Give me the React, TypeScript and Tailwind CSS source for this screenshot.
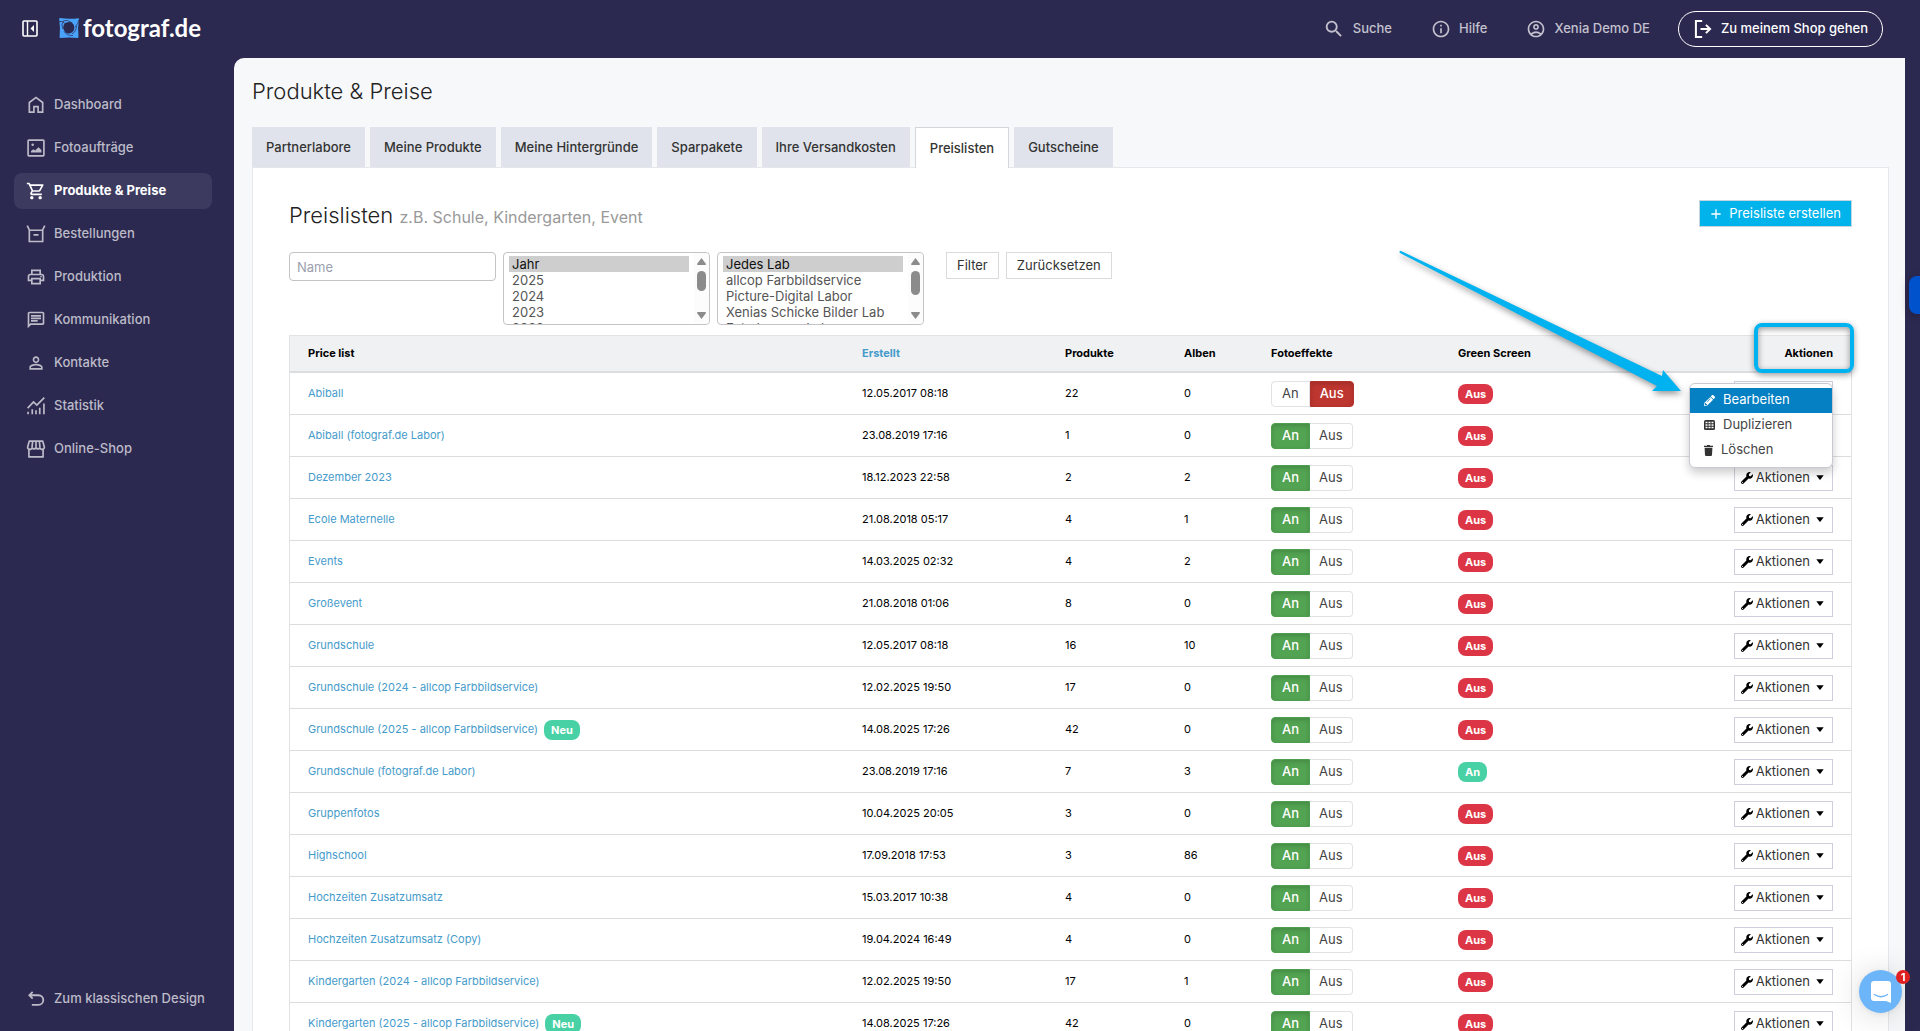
import type { ReactNode } from 'react'
import {
  MdOutlineShoppingCart,
  MdOutlinePrint,
  MdOutlineChat,
  MdPersonOutline,
  MdSearch,
  MdInfoOutline,
  MdOutlineAccountCircle,
  MdAdd,
} from 'react-icons/md'
import { FaWrench, FaPencilAlt } from 'react-icons/fa'

function Icon({ children, size = 20 }: { children: ReactNode; size?: number }) {
  return (
    <svg width={size} height={size} viewBox="0 0 24 24" fill="currentColor" className="shrink-0" aria-hidden>
      {children}
    </svg>
  )
}

const HomeIcon = () => (
  <Icon>
    <path d="M5 19.500h3.500V13h7v6.500H19v-10l-7-5.300-7 5.300zM3 21.500v-13L12 1.700l9 6.800v13h-7.500V15h-3v6.500z" />
  </Icon>
)

const PhotoIcon = () => (
  <Icon>
    <rect x="2.500" y="2.500" width="19" height="19" rx="1" fill="none" stroke="currentColor" strokeWidth="2" />
    <path d="M6 17.500v-2l3-2 2 1.500 4-4 3.500 3.500v3z" />
    <circle cx="8" cy="8" r="1.500" />
  </Icon>
)

const BoxIcon = () => (
  <Icon>
    <path
      d="M1.500 2 4 7v14h16V7l2.500-5M4 7.500h16M9 13h6"
      fill="none"
      stroke="currentColor"
      strokeWidth="2"
    />
  </Icon>
)

const StatsIcon = () => (
  <Icon>
    <path
      d="M2 14.500 9 7l4 4L22 2M2.500 22v-3M7.500 22v-6M12 22v-5M16.500 22v-8M21.500 22V9"
      fill="none"
      stroke="currentColor"
      strokeWidth="2"
    />
  </Icon>
)

const ShopIcon = () => (
  <Icon>
    <path
      d="M3.500 12v9.500h17V12M4 2.500h16l2 7a2.600 2.600 0 0 1-5.200.8 2.600 2.600 0 0 1-4.800 0 2.600 2.600 0 0 1-4.800 0A2.600 2.600 0 0 1 2 9.500zM8 2.500l-.8 7.800M12 2.500v7.800M16 2.500l.8 7.800"
      fill="none"
      stroke="currentColor"
      strokeWidth="2"
      strokeLinejoin="round"
    />
  </Icon>
)

const BackIcon = () => (
  <Icon>
    <path
      d="M8 3.500 4 7.500l4 4M4.500 7.500H15a5.500 5.500 0 0 1 0 11.500H7"
      fill="none"
      stroke="currentColor"
      strokeWidth="2.200"
    />
  </Icon>
)

const LeaveIcon = () => (
  <Icon>
    <path
      d="M11 2.500H3.500v19H11M9 12h11.500M15.500 7l5 5-5 5"
      fill="none"
      stroke="currentColor"
      strokeWidth="2.400"
    />
  </Icon>
)

const CollapseIcon = () => (
  <svg width="16" height="17" viewBox="0 0 16 17" aria-hidden>
    <rect x="1" y="1" width="14" height="15" rx="1" fill="none" stroke="#fff" strokeWidth="1.600" />
    <path d="M5.500 1v15" stroke="#fff" strokeWidth="1.400" />
    <path d="M12 5v7L8.500 8.500z" fill="#fff" />
  </svg>
)

const LogoMark = () => (
  <svg width="20" height="20" viewBox="0 0 20 20" aria-hidden>
    <path d="M1 0q9 1.500 18.500.2Q20 0 19.900 1 18.500 10 19.500 19q0 1-1 1Q10 18.800 1.500 20q-1 0-.9-1Q1.600 10 .2 1 .100 0 1 0z" fill="#4aa3fb" />
    <path d="M7.500 4.500Q12 3 14.500 6.500 16.500 11 13.500 14 9.500 17 6 14 3 10 5 6.500 6 5 7.500 4.500z" fill="#2c2950" />
    <path
      d="M0 3.500Q3 2.500 6 5.500M4 11Q1.500 7 4.500 2.800 8 1 13.500 5M16 9q3-3 4-7M13 15.800Q17 14 17.500 8M5 13.500Q8 18 14 17.500"
      fill="none"
      stroke="#2c2950"
      strokeWidth=".7"
    />
  </svg>
)

const GridIcon = () => (
  <svg width="11" height="10" viewBox="0 0 11 10" aria-hidden>
    <rect width="11" height="10" rx="1.500" fill="#333" />
    <path
      d="M1.500 2.500h2M4.500 2.500h2M7.500 2.500h2M1.500 5h2M4.500 5h2M7.500 5h2M1.500 7.500h2M4.500 7.500h2M7.500 7.500h2"
      stroke="#fff"
      strokeWidth="1.300"
    />
  </svg>
)

const TrashIcon = () => (
  <svg width="9" height="11" viewBox="0 0 9 11" fill="#333" aria-hidden>
    <path d="M0 .8h2.800L3.300 0h2.400l.5.8H9v1.200H0zM.6 2.700h7.800L8 10q-.1 1-1 1H2q-.9 0-1-1z" />
  </svg>
)

const nav = [
  { label: 'Dashboard', icon: <HomeIcon /> },
  { label: 'Fotoaufträge', icon: <PhotoIcon /> },
  { label: 'Produkte & Preise', icon: <MdOutlineShoppingCart size={20} />, active: true },
  { label: 'Bestellungen', icon: <BoxIcon /> },
  { label: 'Produktion', icon: <MdOutlinePrint size={20} /> },
  { label: 'Kommunikation', icon: <MdOutlineChat size={20} /> },
  { label: 'Kontakte', icon: <MdPersonOutline size={20} /> },
  { label: 'Statistik', icon: <StatsIcon /> },
  { label: 'Online-Shop', icon: <ShopIcon /> },
]

const tabs = [
  'Partnerlabore',
  'Meine Produkte',
  'Meine Hintergründe',
  'Sparpakete',
  'Ihre Versandkosten',
  'Preislisten',
  'Gutscheine',
]

type PriceList = {
  name: string
  created: string
  products: number
  albums: number
  effects?: boolean
  greenScreen?: boolean
  isNew?: boolean
}

const priceLists: PriceList[] = [
  { name: 'Abiball', created: '12.05.2017 08:18', products: 22, albums: 0, effects: false },
  { name: 'Abiball (fotograf.de Labor)', created: '23.08.2019 17:16', products: 1, albums: 0 },
  { name: 'Dezember 2023', created: '18.12.2023 22:58', products: 2, albums: 2 },
  { name: 'Ecole Maternelle', created: '21.08.2018 05:17', products: 4, albums: 1 },
  { name: 'Events', created: '14.03.2025 02:32', products: 4, albums: 2 },
  { name: 'Großevent', created: '21.08.2018 01:06', products: 8, albums: 0 },
  { name: 'Grundschule', created: '12.05.2017 08:18', products: 16, albums: 10 },
  { name: 'Grundschule (2024 - allcop Farbbildservice)', created: '12.02.2025 19:50', products: 17, albums: 0 },
  { name: 'Grundschule (2025 - allcop Farbbildservice)', created: '14.08.2025 17:26', products: 42, albums: 0, isNew: true },
  { name: 'Grundschule (fotograf.de Labor)', created: '23.08.2019 17:16', products: 7, albums: 3, greenScreen: true },
  { name: 'Gruppenfotos', created: '10.04.2025 20:05', products: 3, albums: 0 },
  { name: 'Highschool', created: '17.09.2018 17:53', products: 3, albums: 86 },
  { name: 'Hochzeiten Zusatzumsatz', created: '15.03.2017 10:38', products: 4, albums: 0 },
  { name: 'Hochzeiten Zusatzumsatz (Copy)', created: '19.04.2024 16:49', products: 4, albums: 0 },
  { name: 'Kindergarten (2024 - allcop Farbbildservice)', created: '12.02.2025 19:50', products: 17, albums: 1 },
  { name: 'Kindergarten (2025 - allcop Farbbildservice)', created: '14.08.2025 17:26', products: 42, albums: 0, isNew: true },
]

function Badge({ tone, children }: { tone: 'red' | 'green'; children: ReactNode }) {
  return (
    <span
      className={`block h-5 w-fit rounded-lg px-[7px] text-[11px] leading-5 font-bold text-white ${
        tone === 'red' ? 'bg-[#dc3545]' : 'bg-[#48d1a5]'
      }`}
    >
      {children}
    </span>
  )
}

function Toggle({ on }: { on: boolean }) {
  return (
    <div className="flex h-[26px] text-[13px] leading-[22px] text-[#444]">
      <button
        type="button"
        className={`rounded-l border px-2.5 pb-0.5 ${
          on ? 'border-[#4f9e4f] bg-[#52a352] font-medium text-white shadow-[inset_0_2px_4px_rgba(0,0,0,0.15)]' : 'border-[#e2e2e6] bg-white'
        }`}
      >
        An
      </button>
      <button
        type="button"
        className={`rounded-r border px-[9px] pb-0.5 ${
          on ? 'border-l-0 border-[#e2e2e6] bg-white' : 'border-[#b3322c] bg-[#bd362f] font-medium text-white shadow-[inset_0_2px_4px_rgba(0,0,0,0.15)]'
        }`}
      >
        Aus
      </button>
    </div>
  )
}

function ActionMenu() {
  return (
    <div
      role="menu"
      className="absolute top-0.5 right-0 z-10 w-36 rounded-md border border-[#c9c9d3] bg-white py-1 text-left shadow-[0_5px_10px_rgba(0,0,0,0.2)]"
    >
      <a href="#edit" role="menuitem" className="flex h-[25px] items-center gap-2 bg-[#0480c3] px-3.5 text-[13px] text-white">
        <FaPencilAlt size={11} />
        Bearbeiten
      </a>
      <a href="#copy" role="menuitem" className="flex h-[25px] items-center gap-2 px-3.5 text-[13px] text-[#444]">
        <GridIcon />
        Duplizieren
      </a>
      <a href="#delete" role="menuitem" className="flex h-[25px] items-center gap-2 px-3.5 text-[13px] text-[#444]">
        <TrashIcon />
        Löschen
      </a>
    </div>
  )
}

function ActionButton({ open }: { open?: boolean }) {
  return (
    <div className="relative inline-block align-middle">
      <button
        type="button"
        aria-haspopup="menu"
        aria-expanded={!!open}
        className="flex h-[26px] items-center border border-[#ced0dd] bg-white pr-2 pl-1.5 text-[13px] text-[#333]"
      >
        <FaWrench size={12} className="mr-[3px] text-black" />
        Aktionen
        <svg width="8" height="5" viewBox="0 0 8 5" className="ml-1.5" aria-hidden>
          <path d="M.3.300h7.400L4.500 4.500q-.5.500-1 0z" fill="#000" />
        </svg>
      </button>
      {open && <ActionMenu />}
    </div>
  )
}

function ListBox({ label, options, thumb }: { label: string; options: string[]; thumb: string }) {
  return (
    <div className="relative h-[73px] w-[207px] rounded border border-[#c3c3c8] bg-white">
      <select
        multiple
        aria-label={label}
        defaultValue={[options[0]]}
        className="block h-[71px] w-[188px] overflow-y-scroll p-[3px] pl-[5px] text-[13px] text-[#555] outline-none [scrollbar-width:none]"
      >
        {options.map((o) => (
          <option key={o} value={o} className="h-4 min-h-4 p-0 px-[3px] leading-4">
            {o}
          </option>
        ))}
      </select>
      <div className="absolute inset-y-0 right-0 flex w-[15px] flex-col items-center rounded-r bg-[#fcfcfc] py-[5px]" aria-hidden>
        <svg width="9" height="7" viewBox="0 0 9 7">
          <path d="M4.500 0 9 6q0 1-1 1H1Q0 7 0 6z" fill="#8b8b8b" />
        </svg>
        <div className={`mt-1.5 mb-auto w-[9px] rounded-full bg-[#8b8b8b] ${thumb}`} />
        <svg width="9" height="7" viewBox="0 0 9 7">
          <path d="M4.500 7 9 1q0-1-1-1H1Q0 0 0 1z" fill="#8b8b8b" />
        </svg>
      </div>
    </div>
  )
}

function TopBar() {
  return (
    <header className="flex h-[58px] shrink-0 items-center pr-[37px] pl-[22px] text-[13px] font-medium text-[#c2c1cd]">
      <button type="button" aria-label="Menü einklappen" className="pb-px">
        <CollapseIcon />
      </button>
      <a href="#home" className="ml-[21px] flex items-center gap-1 pb-0.5 text-white">
        <LogoMark />
        <span className="font-[Lato,sans-serif] text-2xl leading-6 font-bold">fotograf.de</span>
      </a>
      <nav className="ml-auto flex items-center">
        <button type="button" className="flex items-center gap-2">
          <MdSearch size={22} />
          Suche
        </button>
        <button type="button" className="ml-[39px] flex items-center gap-2">
          <MdInfoOutline size={20} />
          Hilfe
        </button>
        <button type="button" className="ml-[39px] flex items-center gap-2">
          <MdOutlineAccountCircle size={20} />
          Xenia Demo DE
        </button>
        <a
          href="#shop"
          className="ml-7 flex h-9 items-center gap-2 rounded-full border border-white px-3.5 text-white"
        >
          <LeaveIcon />
          Zu meinem Shop gehen
        </a>
      </nav>
    </header>
  )
}

function Sidebar() {
  return (
    <aside className="flex w-[234px] shrink-0 flex-col px-3.5 pt-[29px] pb-3.5 text-[13px] font-medium text-[#bcbbc8]">
      <nav className="flex flex-col gap-[7px]">
        {nav.map((item) => (
          <a
            key={item.label}
            href={`#${item.label}`}
            className={`mr-2 flex h-9 items-center gap-2 rounded-lg pl-3 ${
              item.active ? 'bg-[#3d3a60] font-bold text-white' : ''
            }`}
          >
            {item.icon}
            {item.label}
          </a>
        ))}
      </nav>
      <a href="#classic" className="mt-auto flex h-9 items-center gap-2 pl-3">
        <BackIcon />
        Zum klassischen Design
      </a>
    </aside>
  )
}

function PriceTable() {
  const th = 'border-t border-b-2 border-t-[#e3e3e6] border-b-[#dcdde0] text-left font-bold'
  const td = 'border-b border-[#dcdde0]'
  return (
    <div className="relative mt-2.5">
      <table className="w-full table-fixed border-separate border-spacing-0 border-x border-[#e3e3e6] text-[11px] text-black">
        <thead>
          <tr className="h-[38px] bg-[#f0f1f3]">
            <th className={`${th} px-[18px]`}>Price list</th>
            <th className={`${th} w-[203px] px-[19px]`}>
              <a href="#sort" className="text-[#459bcb]">
                Erstellt
              </a>
            </th>
            <th className={`${th} w-[119px] px-[19px]`}>Produkte</th>
            <th className={`${th} w-[87px] px-[19px]`}>Alben</th>
            <th className={`${th} w-[187px] px-[19px]`}>Fotoeffekte</th>
            <th className={`${th} w-[187px] px-[19px]`}>Green Screen</th>
            <th className={`${th} w-[225px] px-[18px] text-right`}>Aktionen</th>
          </tr>
        </thead>
        <tbody>
          {priceLists.map((p, i) => (
            <tr key={p.name} className="h-[42px]">
              <td className={`${td} px-[18px]`}>
                <div className="flex items-center gap-1.5">
                  <a href="#list" className="text-[#459bcb]">
                    {p.name}
                  </a>
                  {p.isNew && <Badge tone="green">Neu</Badge>}
                </div>
              </td>
              <td className={`${td} px-[19px]`}>{p.created}</td>
              <td className={`${td} px-[19px]`}>{p.products}</td>
              <td className={`${td} px-[19px]`}>{p.albums}</td>
              <td className={`${td} px-[19px]`}>
                <Toggle on={p.effects !== false} />
              </td>
              <td className={`${td} px-[19px]`}>
                <Badge tone={p.greenScreen ? 'green' : 'red'}>{p.greenScreen ? 'An' : 'Aus'}</Badge>
              </td>
              <td className={`${td} px-[18px] text-right`}>
                <ActionButton open={i === 0} />
              </td>
            </tr>
          ))}
        </tbody>
      </table>

      {/* callout: frame round the column head and arrow to the open menu */}
      <div className="pointer-events-none absolute -top-3 -right-0.5 h-[50px] w-[100px] rounded-lg border-4 border-[#00b3f0] shadow-[0_2px_6px_rgba(0,0,0,0.4),inset_0_2px_6px_rgba(0,0,0,0.4)]" />
      <svg
        width="300"
        height="160"
        viewBox="0 0 300 160"
        className="pointer-events-none absolute -top-[93px] right-[161px] z-20 drop-shadow-[1px_3px_3px_rgba(0,0,0,0.4)]"
        aria-hidden
      >
        <path d="M9 9q-1 1 0 2L266 144l-5 5h29l-18-21-1 6L10 9q-.5-.5-1 0z" fill="#00b3f0" />
      </svg>
    </div>
  )
}

export default function App() {
  return (
    <div className="flex h-screen flex-col overflow-hidden bg-[#2c2950] font-[Inter,sans-serif]">
      <TopBar />
      <div className="flex min-h-0 flex-1">
        <Sidebar />
        <main className="mr-[15px] min-w-0 flex-1 overflow-y-auto rounded-tl-[10px] bg-[#f7f8fa] pr-4 pl-[18px] [scrollbar-width:none]">
          <h1 className="mt-[19px] text-[22px] leading-7 font-light text-[#222]">Produkte &amp; Preise</h1>

          <div className="mt-[22px] flex gap-[5px] text-[13px] font-medium text-[#333]">
            {tabs.map((tab) =>
              tab === 'Preislisten' ? (
                <a
                  key={tab}
                  href={`#${tab}`}
                  className="relative -mb-px h-[41px] border border-b-0 border-[#d5d6da] bg-white px-3.5 leading-10"
                >
                  {tab}
                </a>
              ) : (
                <a key={tab} href={`#${tab}`} className="h-10 bg-[#e0e3eb] px-3.5 leading-10">
                  {tab}
                </a>
              ),
            )}
          </div>

          <section className="border border-[#e6e7ea] bg-white px-9 pt-8">
            <div className="flex items-start justify-between">
              <h2 className="text-[22px] leading-[30px] font-light text-[#222]">
                Preislisten <small className="text-base font-normal text-[#999]">z.B. Schule, Kindergarten, Event</small>
              </h2>
              <button
                type="button"
                className="flex h-[27px] items-center gap-[5px] border border-[#c6d6de] bg-[#00b3ea] pr-2.5 pl-2 text-[13px] text-white"
              >
                <MdAdd size={16} />
                Preisliste erstellen
              </button>
            </div>

            <form className="mt-[22px] flex items-start gap-[7px]">
              <input
                type="text"
                aria-label="Name"
                placeholder="Name"
                className="h-[29px] w-[207px] rounded border border-[#c3c3c8] px-[7px] text-[13px] placeholder:text-[#9c9fae]"
              />
              <ListBox label="Jahr" thumb="h-5" options={['Jahr', '2025', '2024', '2023', '2022', '2021', '2020']} />
              <ListBox
                label="Lab"
                thumb="h-6"
                options={[
                  'Jedes Lab',
                  'allcop Farbbildservice',
                  'Picture-Digital Labor',
                  'Xenias Schicke Bilder Lab',
                  'Foto Lounge Lab',
                  'fotograf.de Labor',
                ]}
              />
              <button
                type="button"
                className="ml-[15px] h-[27px] border border-[#dadbdd] bg-white px-2.5 text-[13px] text-[#333]"
              >
                Filter
              </button>
              <button type="reset" className="h-[27px] border border-[#dadbdd] bg-white px-2.5 text-[13px] text-[#333]">
                Zurücksetzen
              </button>
            </form>

            <PriceTable />
          </section>
        </main>
      </div>

      <button
        type="button"
        aria-label="Feedback"
        className="fixed top-[276px] right-0 h-[38px] w-[11px] rounded-l-lg bg-[#0052cc] shadow-[0_2px_10px_rgba(0,0,0,0.3)]"
      />
      <button
        type="button"
        aria-label="Chat öffnen"
        className="fixed right-[18px] bottom-[18px] flex size-[43px] items-center justify-center rounded-full bg-[#6cb5f9] shadow-[0_1px_6px_rgba(0,0,0,0.08),0_2px_32px_rgba(0,0,0,0.16)]"
      >
        <svg width="20" height="22" viewBox="0 0 20 22" aria-hidden>
          <path d="M3 0h14q3 0 3 3v19l-5-2H3q-3 0-3-3V3q0-3 3-3z" fill="#fff" />
          <path d="M3.500 13.500q6.500 4.500 13 0" fill="none" stroke="#6cb5f9" strokeWidth="1.400" strokeLinecap="round" />
        </svg>
        <span className="absolute top-0 -right-2 size-3.5 rounded-full bg-[#e02020] text-center text-[11px] leading-3.5 font-bold text-white">
          1
        </span>
      </button>
    </div>
  )
}
